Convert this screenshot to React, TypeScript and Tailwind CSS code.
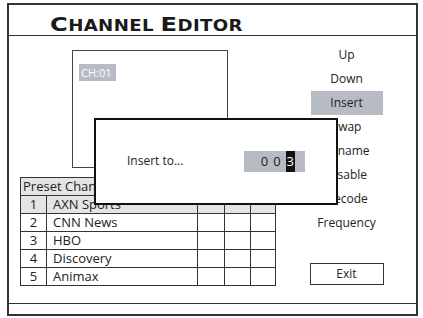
import React from 'react';

const MENU = ['Up', 'Down', 'Insert', 'Swap', 'Rename', 'Disable', 'Decode', 'Frequency'];

const CHANNELS = [
  { no: 1, name: 'AXN Sports' },
  { no: 2, name: 'CNN News' },
  { no: 3, name: 'HBO' },
  { no: 4, name: 'Discovery' },
  { no: 5, name: 'Animax' },
];

const App: React.FC = () => {
  return (
    <div className="w-[423px] h-[318px] bg-white pt-[3px] pl-[7px] text-[#222] font-['Open_Sans',sans-serif]">
      <div className="relative w-[411px] h-[313px] border-2 border-[#333] flex flex-col">
        {/* title, hand-made small caps, stretched to the wide face of the original */}
        <div className="h-[31px] border-b border-[#333] pl-[41px] flex items-end pb-[1px]">
          <span className="inline-block origin-left scale-x-[1.21] leading-none font-semibold tracking-[0.3px] font-['DejaVu_Sans',sans-serif] text-[#1a1a1a]">
            <span className="text-[20px]">C</span>
            <span className="text-[15px]">HANNEL </span>
            <span className="text-[20px]">E</span>
            <span className="text-[15px]">DITOR</span>
          </span>
        </div>

        <div className="flex flex-1">
          {/* left side */}
          <div className="w-[280px] pl-[11px]">
            <div className="ml-[52px] mt-[14px] w-[156px] h-[118px] border border-[#444] pt-[8px] pl-[6px]">
              <span className="inline-block bg-[#b7bbc3] text-white text-[11px] leading-[17px] px-[2px] w-[37px]">
                CH:01
              </span>
            </div>

            <table className="mt-[9px] border-collapse text-[13px] leading-none">
              <tbody>
                <tr className="h-[18px] bg-[#e4e4e4]">
                  <td colSpan={2} className="border border-[#333] px-[2px] w-[177px]">
                    Preset Channel
                  </td>
                  <td className="border border-[#333] w-[27px]" />
                  <td className="border border-[#333] w-[26px]" />
                  <td className="border border-[#333] w-[25px]" />
                </tr>
                {CHANNELS.map((c) => (
                  <tr key={c.no} className={`h-[18px] ${c.no === 1 ? 'bg-[#e4e4e4]' : ''}`}>
                    <td className="border border-[#333] w-[26px] text-center">{c.no}</td>
                    <td className="border border-[#333] w-[151px] pl-[6px]">{c.name}</td>
                    <td className="border border-[#333]" />
                    <td className="border border-[#333]" />
                    <td className="border border-[#333]" />
                  </tr>
                ))}
              </tbody>
            </table>
          </div>

          {/* right menu */}
          <div className="flex-1 flex flex-col items-center pt-[7px] pr-[12px] text-[12px]">
            {MENU.map((m) => (
              <div
                key={m}
                className={`h-[24px] w-[72px] flex items-center justify-center ${
                  m === 'Insert' ? 'bg-[#b7bbc3]' : ''
                }`}
              >
                {m}
              </div>
            ))}
            <div className="mt-[28px] w-[74px] h-[22px] border-[1.5px] border-[#333] flex items-center justify-center">
              Exit
            </div>
          </div>
        </div>

        {/* status bar */}
        <div className="h-[11px] border-t border-[#333]" />

        {/* dialog */}
        <div className="absolute left-[85px] top-[113px] w-[244px] h-[87px] border-2 border-[#111] bg-white flex items-center pl-[31px] pr-[31px]">
          <span className="text-[12px] flex-1 -mt-[1px]">Insert to...</span>
          <div className="w-[61px] h-[21px] bg-[#b7bbc3] flex items-center justify-end pr-[10px] text-[13px] gap-[5px]">
            <span>0</span>
            <span>0</span>
            <span className="bg-[#111] text-white px-[1px] leading-[21px]">3</span>
          </div>
        </div>
      </div>
    </div>
  );
};

export default App;
